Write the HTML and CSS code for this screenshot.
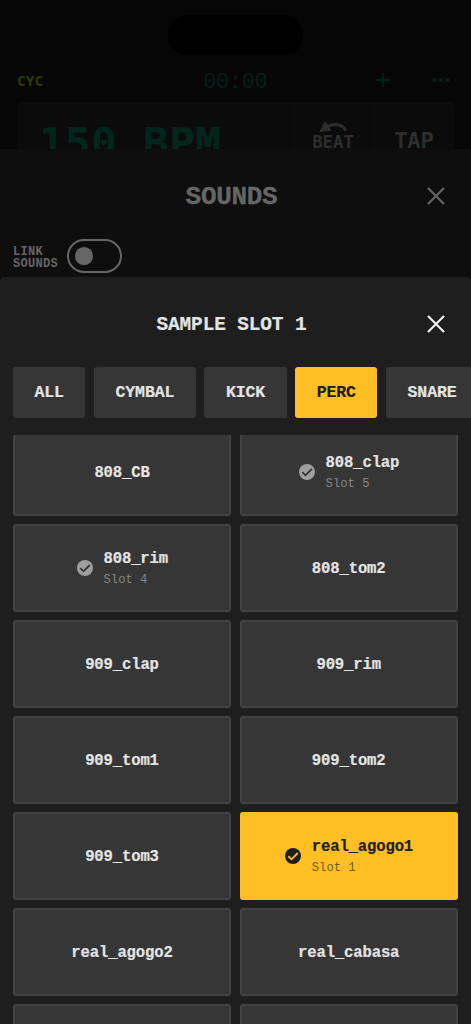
FILE: index.html
```html
<!DOCTYPE html>
<html lang="en">
<head>
<meta charset="utf-8">
<title>Sample Slot 1</title>
<link rel="stylesheet" href="styles.css">
</head>
<body>
<div class="screen">
  <header class="player">
    <div class="island"></div>
    <div class="topbar">
      <span class="cyc">CYC</span>
      <span class="time">00:00</span>
      <span class="actions">
        <svg class="plus" width="16" height="16" viewBox="0 0 16 16"><path d="M8 .5v15M.5 8h15"/></svg>
        <svg class="dots" width="18" height="6" viewBox="0 0 18 6"><circle cx="2.4" cy="3" r="2.1"/><circle cx="8.9" cy="3" r="2.1"/><circle cx="15.4" cy="3" r="2.1"/></svg>
      </span>
    </div>
    <div class="tempo">
      <div class="bpm">150 BPM</div>
      <div class="beat">
        <svg width="28" height="13" viewBox="0 0 28 13"><path class="head" d="M0 11.2 6.2 0 12.2 9.8z"/><path class="arc" d="M9 5.2c6-3 14-2 17.2 3.4"/></svg>
        <span>BEAT</span>
      </div>
      <div class="tap">TAP</div>
    </div>
  </header>

  <section class="sounds">
    <div class="sounds-head">
      <h2>SOUNDS</h2>
      <svg class="close" viewBox="0 0 18 18"><path d="M1 1l16 16M17 1L1 17"/></svg>
    </div>
    <div class="link-row">
      <span class="link-label">LINK<br>SOUNDS</span>
      <span class="toggle"><span class="knob"></span></span>
    </div>
  </section>

  <section class="sheet">
    <div class="sheet-head">
      <h1>SAMPLE SLOT 1</h1>
      <svg class="close" viewBox="0 0 18 18"><path d="M1 1l16 16M17 1L1 17"/></svg>
    </div>
    <nav class="tabs">
      <span class="tab">ALL</span>
      <span class="tab">CYMBAL</span>
      <span class="tab">KICK</span>
      <span class="tab active">PERC</span>
      <span class="tab">SNARE</span>
    </nav>
    <div class="list">
      <div class="grid">
        <div class="card"><b>808_CB</b></div>
        <div class="card">
          <svg class="check" viewBox="0 0 16 16"><circle cx="8" cy="8" r="8"/><path d="M3.3 8.1l3.2 3.2 6.3-6.3"/></svg>
          <div class="info"><b>808_clap</b><small>Slot 5</small></div>
        </div>
        <div class="card">
          <svg class="check" viewBox="0 0 16 16"><circle cx="8" cy="8" r="8"/><path d="M3.3 8.1l3.2 3.2 6.3-6.3"/></svg>
          <div class="info"><b>808_rim</b><small>Slot 4</small></div>
        </div>
        <div class="card"><b>808_tom2</b></div>
        <div class="card"><b>909_clap</b></div>
        <div class="card"><b>909_rim</b></div>
        <div class="card"><b>909_tom1</b></div>
        <div class="card"><b>909_tom2</b></div>
        <div class="card"><b>909_tom3</b></div>
        <div class="card selected">
          <svg class="check" viewBox="0 0 16 16"><circle cx="8" cy="8" r="8"/><path d="M3.3 8.1l3.2 3.2 6.3-6.3"/></svg>
          <div class="info"><b>real_agogo1</b><small>Slot 1</small></div>
        </div>
        <div class="card"><b>real_agogo2</b></div>
        <div class="card"><b>real_cabasa</b></div>
        <div class="card"></div>
        <div class="card"></div>
      </div>
    </div>
  </section>
</div>
</body>
</html>
```
FILE: styles.css
```css
* { box-sizing: border-box; }
body { margin: 0; background: #060606; font-family: "Liberation Mono", monospace; }
svg { display: block; flex: none; }
h1, h2 { margin: 0; font-weight: 700; }
.screen { width: 471px; height: 1024px; overflow: hidden; display: flex; flex-direction: column; }

.player { height: 149px; flex: none; overflow: hidden; padding-top: 15px; background: #060606; }
.island { width: 135px; height: 39.5px; margin: 0 auto; border-radius: 20px; background: #000; }
.topbar { height: 47.5px; padding: 4px 21px 0 17px; display: grid; grid-template-columns: 1fr auto 1fr; align-items: center; }
.cyc { color: #2a3b06; font: 700 14.6px "DejaVu Sans Mono", monospace; }
.time { color: #04211b; font-size: 21.5px; padding: 3px 0 0 4px; }
.actions { display: flex; justify-content: flex-end; align-items: center; gap: 41px; }
.plus { stroke: #03221c; stroke-width: 1.8; fill: none; }
.dots { fill: #03221c; }
.tempo { height: 90px; margin: 0 17px; border-radius: 3px; background: #0b0b0b; display: grid; grid-template-columns: 277px 80px 1fr; font-family: "DejaVu Sans Mono", monospace; font-weight: 700; color: #2e2e2e; }
.bpm { padding: 16px 0 0 22px; font-size: 43px; line-height: 50px; letter-spacing: .1px; color: #03261c; }
.beat, .tap { border-left: 1px solid #0f0f0f; text-align: center; }
.beat { padding: 19px 3px 0 0; display: flex; flex-direction: column; align-items: center; font-size: 17.3px; line-height: 16px; }
.beat .head { fill: #2e2e2e; }
.beat .arc { stroke: #2e2e2e; stroke-width: 2.8; fill: none; stroke-linecap: round; }
.tap { padding: 26px 1px 0 0; font-size: 22px; line-height: 26px; }

.sounds { height: 127.5px; flex: none; background: #0e0e0e; color: #666; }
.sounds-head { height: 90px; padding: 6px 26px 0 44px; display: grid; grid-template-columns: 1fr 18px; align-items: center; }
.sounds-head h2 { font-size: 26px; letter-spacing: -.3px; text-align: center; padding-right: 8px; -webkit-text-stroke: .3px currentColor; }
.close { width: 18px; height: 18px; stroke: currentColor; stroke-width: 2.2; fill: none; }
.sounds-head .close { margin-top: -2px; }
.link-row { display: flex; align-items: center; gap: 8px; padding-left: 13px; }
.link-label { font-size: 12px; font-weight: 700; line-height: 12px; letter-spacing: .3px; width: 46px; padding-top: 3px; white-space: nowrap; }
.toggle { width: 55px; height: 34px; border: 2px solid #666; border-radius: 17px; display: flex; align-items: center; padding-left: 6px; }
.knob { width: 17.5px; height: 17.5px; border-radius: 50%; background: #666; }

.sheet { flex: 1; min-height: 0; background: #1e1e1e; color: #e4e4e4; border-radius: 4px 4px 0 0; box-shadow: 0 -4px 0 -1px #0e0e0e; display: flex; flex-direction: column; }
.sheet-head { height: 90px; flex: none; padding: 5px 26px 0 36px; display: grid; grid-template-columns: 1fr 18px; align-items: center; }
.sheet-head h1 { font-size: 19.4px; letter-spacing: -.1px; text-align: center; padding-top: 2px; -webkit-text-stroke: .2px currentColor; }
.sheet-head .close { color: #efefef; }
.tabs { display: flex; flex: none; gap: 8.6px; padding-left: 13px; overflow: hidden; }
.tab { flex: none; height: 51.2px; padding: 1px 21.5px 0; border-radius: 3px; background: #363636; display: flex; align-items: center; font-weight: 700; font-size: 16.5px; letter-spacing: -.1px; -webkit-text-stroke: .2px currentColor; }
.tab.active { background: #fdbf24; color: #1e1e1e; }
.list { flex: 1; min-height: 0; margin-top: 17.3px; overflow: hidden; }
.grid { display: grid; grid-template-columns: 218px 218px; grid-auto-rows: 87.3px; gap: 8.7px; padding-left: 13px; margin-top: -6.6px; }
.card { border: 2px solid #424242; border-radius: 3px; background: #363636; display: flex; align-items: center; justify-content: center; gap: 10.5px; }
.card b { font-size: 15.6px; line-height: 20px; letter-spacing: -.15px; padding-top: 2px; -webkit-text-stroke: .2px currentColor; }
.info { display: flex; flex-direction: column; }
.info small { font-size: 12.2px; line-height: 18px; margin-top: 2px; color: #858585; }
.check { width: 16px; height: 16px; margin-left: 1px; fill: #9f9f9f; }
.check path { fill: none; stroke: #363636; stroke-width: 1.8; }
.selected { background: #fdbf24; border-color: #fdbf24; color: #1e1e1e; }
.selected small { color: #715a20; }
.selected .check { fill: #1e1e1e; }
.selected .check path { stroke: #fdbf24; }
```
